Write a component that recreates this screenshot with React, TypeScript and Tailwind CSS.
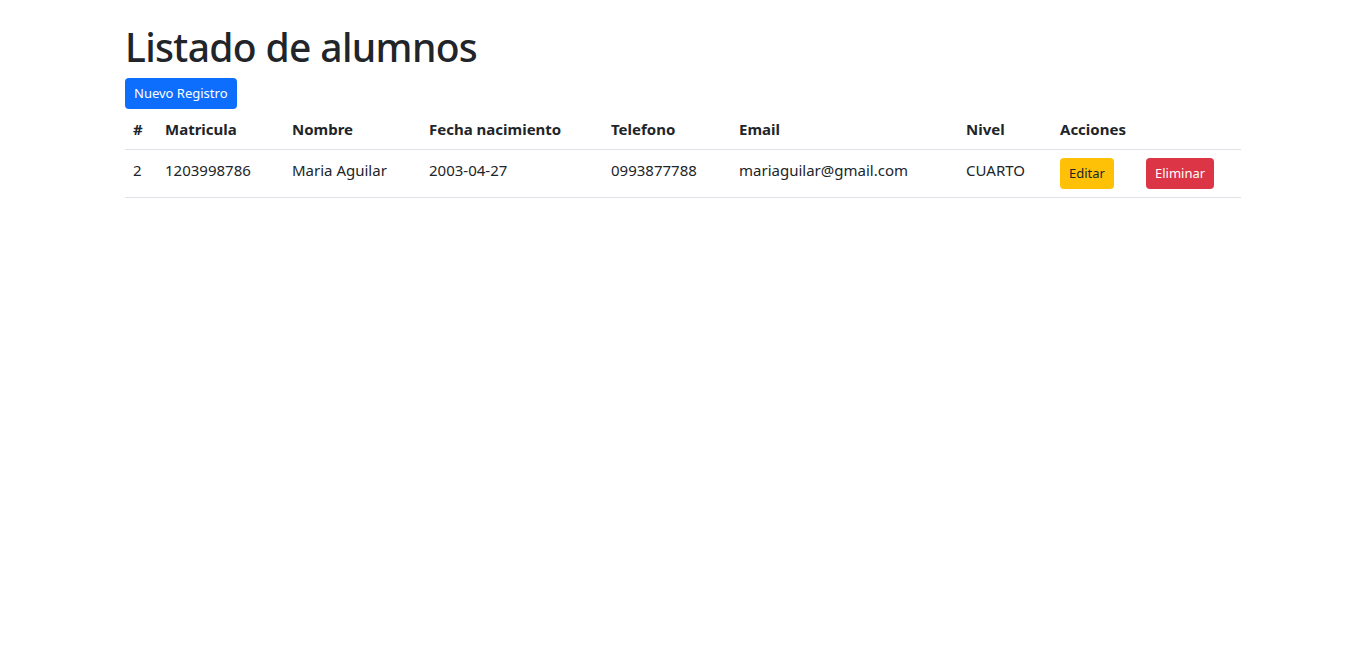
import React from "react";

const alumnos = [
  {
    id: 2,
    matricula: "1203998786",
    nombre: "Maria Aguilar",
    fecha: "2003-04-27",
    telefono: "0993877788",
    email: "mariaguilar@gmail.com",
    nivel: "CUARTO",
  },
];

function App() {
  return (
    <main className="min-h-screen bg-white text-[#212529] font-['Noto_Sans',sans-serif]">
      <section className="ml-[125px] w-[1116px] pt-[23px]">
        <h1 className="text-[39px] leading-[48px] font-medium mb-[7px] tracking-[-0.65px]">Listado de alumnos</h1>
        <button className="bg-[#0d6efd] text-white text-[13px] leading-[21px] px-[9px] py-[5px] rounded-[4px]">
          Nuevo Registro
        </button>

        <table className="w-full table-fixed border-collapse text-[15px]">
          <colgroup>
            <col className="w-[32px]" />
            <col className="w-[127px]" />
            <col className="w-[137px]" />
            <col className="w-[182px]" />
            <col className="w-[128px]" />
            <col className="w-[227px]" />
            <col className="w-[94px]" />
            <col className="w-[86px]" />
            <col className="w-[103px]" />
          </colgroup>
          <thead>
            <tr className="border-b border-[#dee2e6] text-left">
              <th className="px-2 py-2 leading-6 font-bold">#</th>
              <th className="px-2 py-2 leading-6 font-bold">Matricula</th>
              <th className="px-2 py-2 leading-6 font-bold">Nombre</th>
              <th className="px-2 py-2 leading-6 font-bold">Fecha nacimiento</th>
              <th className="px-2 py-2 leading-6 font-bold">Telefono</th>
              <th className="px-2 py-2 leading-6 font-bold">Email</th>
              <th className="px-2 py-2 leading-6 font-bold">Nivel</th>
              <th className="px-2 py-2 leading-6 font-bold">Acciones</th>
              <th className="px-2 py-2 leading-6"></th>
            </tr>
          </thead>
          <tbody>
            {alumnos.map((a) => (
              <tr key={a.id} className="border-b border-[#dee2e6]">
                <td className="px-2 py-2 align-top leading-6">{a.id}</td>
                <td className="px-2 py-2 align-top leading-6">{a.matricula}</td>
                <td className="px-2 py-2 align-top leading-6">{a.nombre}</td>
                <td className="px-2 py-2 align-top leading-6">{a.fecha}</td>
                <td className="px-2 py-2 align-top leading-6">{a.telefono}</td>
                <td className="px-2 py-2 align-top leading-6">{a.email}</td>
                <td className="px-2 py-2 align-top leading-6">{a.nivel}</td>
                <td className="px-2 py-2 align-top">
                  <button className="bg-[#ffc107] text-[#212529] text-[13px] leading-[21px] px-[9px] py-[5px] rounded-[4px]">
                    Editar
                  </button>
                </td>
                <td className="px-2 py-2 align-top">
                  <button className="bg-[#dc3545] text-white text-[13px] leading-[21px] px-[9px] py-[5px] rounded-[4px]">
                    Eliminar
                  </button>
                </td>
              </tr>
            ))}
          </tbody>
        </table>
      </section>
    </main>
  );
}

export default App;
